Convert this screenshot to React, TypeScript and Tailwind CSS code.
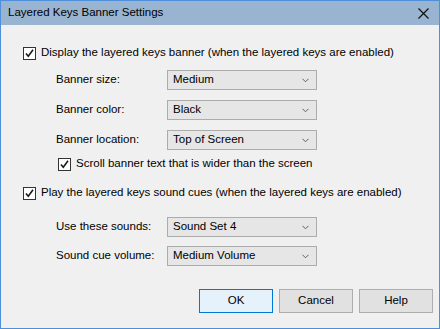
const font = { fontFamily: '"Liberation Sans", Arial, sans-serif' };

const Check = () => (
  <div className="w-[13px] h-[13px] border border-[#333333] bg-white flex items-center justify-center shrink-0">
    <svg width="11" height="11" viewBox="0 0 11 11">
      <path d="M2 5.5 L4.3 8.3 L9 1.8" fill="none" stroke="#1a1a1a" strokeWidth="1.6" />
    </svg>
  </div>
);

const CheckRow = ({ label, indent }: { label: string; indent: string }) => (
  <div className={`flex items-center h-[16px] ${indent}`}>
    <Check />
    <span className="ml-[5px] text-[11.5px] text-black leading-none whitespace-nowrap">{label}</span>
  </div>
);

const Select = ({ value }: { value: string }) => (
  <div className="w-[150px] h-[20px] border border-[#acacac] bg-[#e6e6e6] flex items-center justify-between pl-[5px] pr-[7px]">
    <span className="text-[11.5px] text-black leading-none">{value}</span>
    <svg width="7" height="5" viewBox="0 0 7 5">
      <path d="M0.5 0.8 L3.5 3.8 L6.5 0.8" fill="none" stroke="#606060" strokeWidth="1" />
    </svg>
  </div>
);

const SelectRow = ({ label, value, mt }: { label: string; value: string; mt: string }) => (
  <div className={`flex items-center h-[20px] ${mt}`}>
    <span className="w-[111px] ml-[33px] text-[11.5px] text-black leading-none whitespace-nowrap">{label}</span>
    <Select value={value} />
  </div>
);

export default function App() {
  return (
    <div style={font} className="w-[440px] h-[329px] border border-[#4f8fd9] bg-[#f0f0f0] flex flex-col">
      <div className="h-[24px] bg-[#99b4d1] flex items-center justify-between pl-[7px] pr-[10px]">
        <span className="text-[11.5px] text-black">Layered Keys Banner Settings</span>
        <svg width="11" height="11" viewBox="0 0 11 11">
          <path d="M0.5 0.5 L10.5 10.5 M10.5 0.5 L0.5 10.5" stroke="#111111" strokeWidth="1.2" />
        </svg>
      </div>
      <div className="flex flex-col pl-[22px]">
        <div className="mt-[20px]">
          <CheckRow label="Display the layered keys banner (when the layered keys are enabled)" indent="" />
        </div>
        <SelectRow label="Banner size:" value="Medium" mt="mt-[9px]" />
        <SelectRow label="Banner color:" value="Black" mt="mt-[10px]" />
        <SelectRow label="Banner location:" value="Top of Screen" mt="mt-[10px]" />
        <div className="mt-[6px]">
          <CheckRow label="Scroll banner text that is wider than the screen" indent="ml-[35px]" />
        </div>
        <div className="mt-[13px]">
          <CheckRow label="Play the layered keys sound cues (when the layered keys are enabled)" indent="" />
        </div>
        <SelectRow label="Use these sounds:" value="Sound Set 4" mt="mt-[16px]" />
        <SelectRow label="Sound cue volume:" value="Medium Volume" mt="mt-[9px]" />
      </div>
      <div className="flex justify-end gap-[6px] pr-[6px] mt-[23px]">
        <button className="w-[74px] h-[24px] border border-[#0078d7] bg-[#e5f1fb] text-[11.5px] text-black">OK</button>
        <button className="w-[74px] h-[24px] border border-[#adadad] bg-[#e1e1e1] text-[11.5px] text-black">Cancel</button>
        <button className="w-[74px] h-[24px] border border-[#adadad] bg-[#e1e1e1] text-[11.5px] text-black">Help</button>
      </div>
    </div>
  );
}
